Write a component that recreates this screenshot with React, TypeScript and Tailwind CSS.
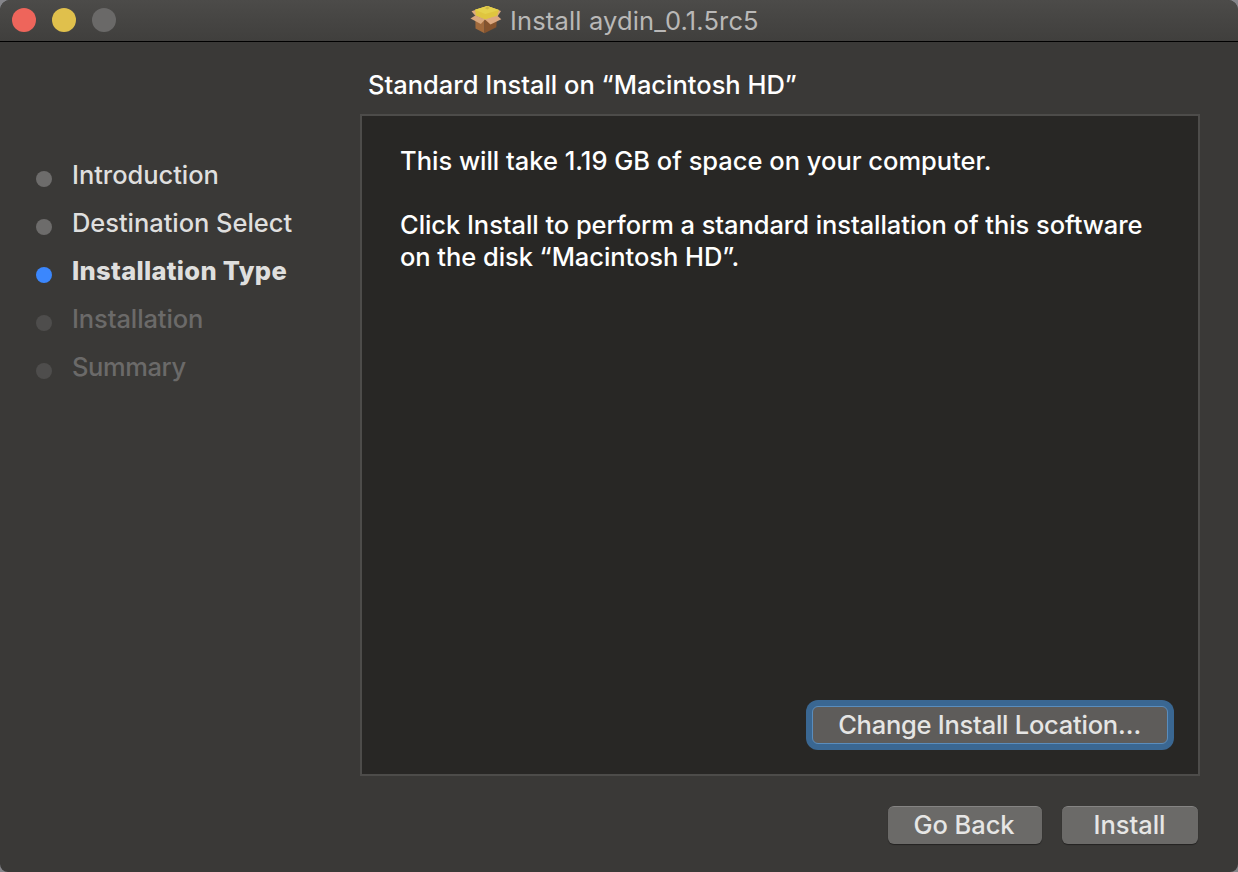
const steps = [
  { label: 'Introduction', dot: 'bg-[#6d6c6b]', text: 'text-[#dfdfde] font-medium tracking-[-0.05px]' },
  { label: 'Destination Select', dot: 'bg-[#6d6c6b]', text: 'text-[#dfdfde] font-medium tracking-[-0.05px]' },
  { label: 'Installation Type', dot: 'bg-[#3b87fd]', text: 'text-[#dfdfde] font-extrabold tracking-[0.3px]' },
  { label: 'Installation', dot: 'bg-[#4e4d4c]', text: 'text-[#6b6a69] font-medium tracking-[-0.1px]' },
  { label: 'Summary', dot: 'bg-[#4e4d4c]', text: 'text-[#6b6a69] font-medium tracking-[-0.4px]' },
];

function PackageIcon() {
  return (
    <svg width="32" height="29" viewBox="0 0 32 29" className="shrink-0">
      <path d="M5.3 12 L14.5 15 L14.5 28.3 L5.5 23.5 Z" fill="#a16a3c" />
      <path d="M14.5 15 L27 11 L26.3 22.3 L14.5 28.3 Z" fill="#85532d" />
      <path d="M1.5 6.3 L17.3 1 L31 6 L27.5 11.5 L15 15 L5.3 10.8 Z" fill="#dca981" />
      <path d="M5 4.8 L17.3 1 L29 5 L27 11 L15.3 14.5 L6 10.8 Z" fill="#dfc53f" />
      <path d="M5 4.8 L17.3 1 L29 5 L15.3 9 Z" fill="#e5d14c" />
      <path d="M15 3.2 L17.3 1.3 L19.6 3 L17.3 4.4 Z" fill="#cdb744" />
      <path d="M5.3 10.6 L15 14.4 L10.8 18.9 L0.5 13.5 Z" fill="#d8a77d" />
      <path d="M15 14.5 L27.3 10.8 L31.3 14.3 L20.5 19.5 Z" fill="#dda981" />
    </svg>
  );
}

export default function App() {
  return (
    <div className="h-[872px] w-[1238px] overflow-hidden bg-[#85858a]">
      <main className="flex h-full flex-col overflow-hidden rounded-t-[10px] rounded-b-[8px] bg-[#3a3937] font-['Inter',sans-serif] text-[25.5px] leading-8 text-white">
        <header className="grid h-[42px] shrink-0 grid-cols-[470px_1fr] border-b border-black bg-linear-to-b from-[#4c4b49] to-[#403f3d]">
          <div className="flex gap-4 pt-2 pl-3">
            <span className="size-6 rounded-full bg-[#ee655b]" />
            <span className="size-6 rounded-full bg-[#e0c04c]" />
            <span className="size-6 rounded-full bg-[#6a6968]" />
          </div>
          <div className="flex items-start gap-2 pt-[5px]">
            <PackageIcon />
            <h1 className="text-[#b9b8b7] tracking-[0.15px]">Install aydin_0.1.5rc5</h1>
          </div>
        </header>
        <div className="flex flex-1">
          <ol className="flex w-[360px] shrink-0 flex-col gap-4 pt-[117px] pl-9">
            {steps.map((s) => (
              <li key={s.label} className="flex h-8 items-center gap-5">
                <span className={`mt-[7px] size-4 rounded-full ${s.dot}`} />
                <span className={s.text}>{s.label}</span>
              </li>
            ))}
          </ol>
          <section className="w-[840px] pt-[27px]">
            <h2 className="pl-2 font-medium tracking-[-0.01px]">Standard Install on “Macintosh HD”</h2>
            <div className="mt-[13px] flex h-[662px] flex-col justify-between border-2 border-[#4d4c4a] bg-[#282725] pt-[29px] pb-6 pl-[38px] pr-6">
              <div className="whitespace-nowrap font-medium tracking-[-0.06px]">
                <p className="tracking-[-0.01px]">This will take 1.19 GB of space on your computer.</p>
                <p className="mt-8">Click Install to perform a standard installation of this software</p>
                <p>on the disk “Macintosh HD”.</p>
              </div>
              <button className="h-[50px] w-[368px] self-end rounded-[12px] bg-[#3a6792] p-1.5">
                <span className="flex h-full items-center justify-center rounded-[6px] border border-[#5a8dbd] bg-[#5e5c5a] pr-px font-medium text-[#e5e5e4] tracking-[-0.25px]">
                  Change Install Location…
                </span>
              </button>
            </div>
            <div className="mt-[30px] flex justify-end gap-5 pr-0.5 font-medium text-[#e6e6e5] tracking-[-0.05px]">
              <button className="h-[38px] w-[154px] rounded-[6px] border-t border-[#858483] bg-[#6b6a68] pr-[2px] pb-[2px] shadow-[0_1px_1px_#00000066]">Go Back</button>
              <button className="h-[38px] w-[136px] rounded-[6px] border-t border-[#858483] bg-[#6b6a68] pr-px pb-[2px] shadow-[0_1px_1px_#00000066]">Install</button>
            </div>
          </section>
        </div>
      </main>
    </div>
  );
}
